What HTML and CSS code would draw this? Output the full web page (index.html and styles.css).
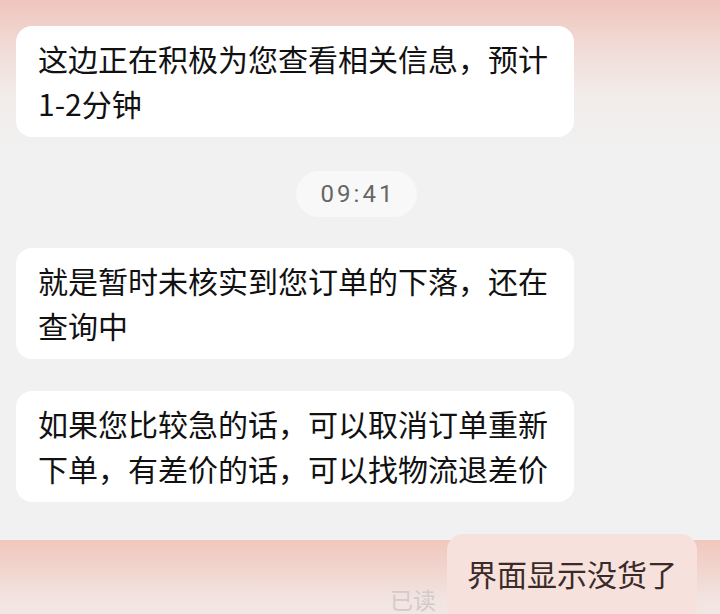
FILE: index.html
```html
<!DOCTYPE html>
<html lang="zh-CN">
<head>
<meta charset="utf-8">
<link rel="stylesheet" href="styles.css">
</head>
<body>
<div class="page">
  <div class="thread">
    <div class="bubble">这边正在积极为您查看相关信息，预计1-2分钟</div>
    <div class="time-row"><span class="time">09:41</span></div>
    <div class="bubble">就是暂时未核实到您订单的下落，还在查询中</div>
    <div class="bubble">如果您比较急的话，可以取消订单重新下单，有差价的话，可以找物流退差价</div>
  </div>
  <div class="band">
    <div class="sent-row">
      <span class="read">已读</span>
      <div class="sent">界面显示没货了</div>
    </div>
  </div>
</div>
</body>
</html>
```

FILE: styles.css
```css
html, body {
  margin: 0;
  padding: 0;
}
body {
  width: 720px;
  height: 614px;
  overflow: hidden;
  font-family: "Noto Sans CJK SC", "Noto Sans", sans-serif;
  background: #f1f1f1;
}
.page {
  width: 720px;
  height: 614px;
  display: flex;
  flex-direction: column;
  background: linear-gradient(180deg, #efc5bc 0px, #f1dad5 45px, #f2ecea 95px, #f1f1f1 150px, #f1f1f1 100%);
}
.thread {
  display: flex;
  flex-direction: column;
  align-items: flex-start;
  padding: 26px 0 0 16px;
}
.bubble {
  box-sizing: border-box;
  width: 558px;
  padding: 10px 22px 11px 22px;
  background: #ffffff;
  border-radius: 16px;
  font-size: 30px;
  line-height: 45px;
  color: #111111;
}
.time-row {
  width: 681px;
  display: flex;
  justify-content: center;
  margin: 34px 0 31px;
}
.time {
  display: inline-block;
  width: 121px;
  height: 46px;
  line-height: 46px;
  text-align: center;
  border-radius: 23px;
  background: #f8f8f8;
  font-family: "Roboto", "Noto Sans", sans-serif;
  font-size: 24px;
  letter-spacing: 3px;
  text-indent: 3px;
  color: #666666;
}
.bubble + .bubble {
  margin-top: 32px;
}
.band {
  flex: 1;
  margin-top: 38px;
  background: linear-gradient(180deg, #f1c7bd 0px, #f1d5ce 30px, #f2e4e1 60px, #f2e8e6 100%);
}
.sent-row {
  display: flex;
  justify-content: flex-end;
  align-items: flex-start;
  margin-top: -6px;
  padding-right: 23px;
  gap: 11px;
}
.read {
  margin-top: 50px;
  font-size: 23px;
  line-height: 30px;
  color: #d3cbc9;
}
.sent {
  box-sizing: border-box;
  height: 90px;
  white-space: nowrap;
  padding: 17px 20px 0 20px;
  background: #f6e1dc;
  border-radius: 16px 16px 0 0;
  font-size: 30px;
  line-height: 45px;
  color: #3a2b29;
}
```
